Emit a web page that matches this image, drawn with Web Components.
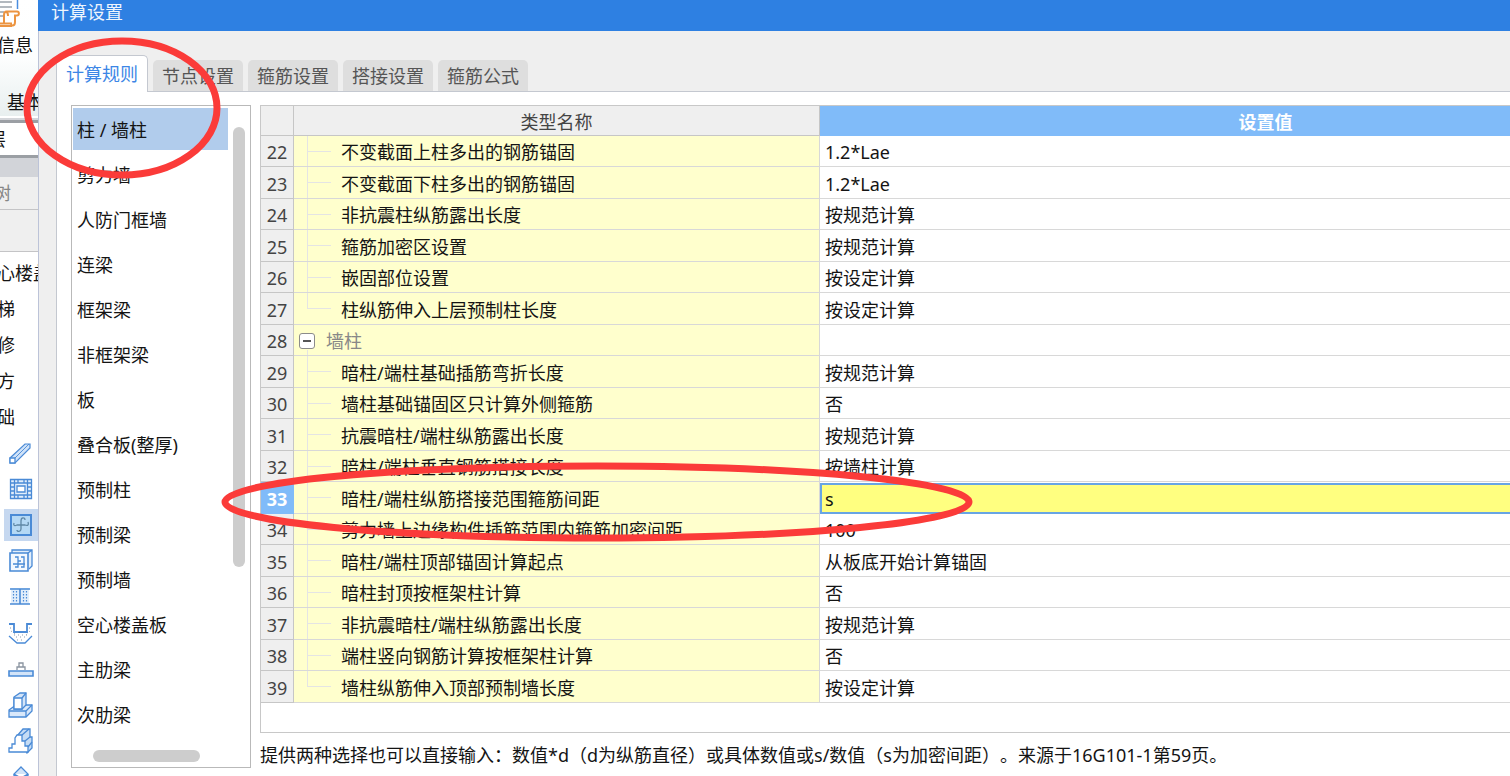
<!DOCTYPE html>
<html lang="zh-CN">
<head>
<meta charset="utf-8">
<title>计算设置</title>
<style>
  html, body { height: 100%; }
  body {
    margin: 0;
    font: 18px/24px "Noto Sans", "Noto Sans CJK SC", sans-serif;
    text-spacing-trim: space-all;
    color: #141414;
    background: #fff;
    overflow: hidden;
  }
</style>
</head>
<body>
<calc-app></calc-app>

<script>
const define = (name, html, setup) => {
  const template = document.createElement('template');
  template.innerHTML = html;
  customElements.define(name, class extends HTMLElement {
    constructor() {
      super();
      this.attachShadow({ mode: 'open' }).append(template.content.cloneNode(true));
    }
    connectedCallback() {
      if (setup && !this.ready) { this.ready = true; setup(this, this.shadowRoot); }
    }
  });
};

/* Toolbox of the main window, partly covered by the dialog */
const toolIcons = [
  ['梁', '<path fill="#cfe2f8" stroke-width="1.2" d="M2 18 17 4h5v4L7 23H2z"/><path fill="#fff" d="M2 18h5v5H2z"/><path stroke-width=".9" d="M7 18 21 4"/>'],
  ['板', '<path fill="#e2eefb" d="M2.5 3.5h21v19h-21z"/><path d="M2 7h21M2 19h21M6.500 3v20M19.500 3v20M10 3v4M16 3v4M10 19v4M16 19v4M2 11h4M2 15h4M20 11h4M20 15h4"/><path fill="#fff" d="M9 10h8v6H9z"/>'],
  ['板洞', '<path fill="#b4d8f5" stroke-width="2" d="M3 3h20v20H3z"/><path stroke="#5f87a5" d="M6 11c-1 3 1 3 3 2h8c3 1 4 0 3-3M13 17V9c0-4 4-4 4-1M13 12v5c0 3-4 3-4 1"/>', true],
  ['板受力筋', '<path fill="#e2eefb" d="M4 5V2h20v16l-3 3M20 5l4-3"/><path fill="#f3f8fe" stroke-width="1.6" d="M2 5h18v18H2z"/><path d="M7 9h3v10H7M13 9h3v10h-3M5 16h12M10 13h3"/>'],
  ['暗梁', '<path fill="#e2eefb" stroke="none" d="M3 4h18v16H3z"/><path stroke-width="1.6" d="M2 5h20M2 20h20M12 5v15"/><path stroke-dasharray="1.500 1.500" stroke-width="1.2" d="M5.500 7v12M8.500 7v12M15.500 7v12M18.500 7v12"/>'],
  ['基坑', '<path stroke-width="1.800" d="M1 4h5v8h13V4h5"/><path d="m1 16 8 7h8l7-7"/><path stroke="#8c9bac" stroke-dasharray="1 3" stroke-width="1" d="M2 8h3M21 8h3M3 11l4 3M22 11l-4 4M6 15h14M8 17h11M9 20h8"/>'],
  ['条基', '<path fill="#d3e4f8" stroke-width="1.600" d="M1 15h24v5H1z"/><path stroke="#8a94a0" d="M9 14v-3h8v3M11 11V7h4v4"/>'],
  ['独基', '<path fill="#d9e8fa" d="m1 18 7-5h16v6l-6 6H1z"/><path d="M1 19h17v6M18 19l6-6"/><path fill="#d3e4f8" d="m6 5 6-4h6v12l-4 4H6z"/><path fill="#fff" d="M6 6h8v11H6z"/><path d="m14 6 4-5"/>'],
  ['承台', '<path fill="#c5dcf5" d="m9 8 6-7h7v8h2v11l-5 5-4-11z"/><path fill="#fff" d="M1 24v-4h3v-4h3v-6l2-3h5v6h3v5h3v6z"/><path d="m14 7 7-6M17 13l5-4M20 19l4-5"/>'],
  ['桩', '<path fill="#d3e4f8" d="m13 3 7 7-7 4-7-4zM6 10v14h14V10"/>'],
];
define('tool-strip', `
  <style>
    :host { display: flex; flex-direction: column; overflow: hidden; background: #fff; white-space: nowrap; }
    .ribbon { height: 116px; flex: none; background: linear-gradient(#fff 0, #fdfefe 50%, #e8efef); }
    .ribbon svg { display: block; height: 34px; width: 22px; }
    .ribbon span { display: block; margin-left: -3px; line-height: 22px; }
    .ribbon span + span { margin: 35px 0 0 7px; }
    .floor { flex: none; height: 32px; line-height: 32px; border: solid #9b9fa4; border-width: 3px 0; outline: 2px solid #d4d6da; margin-top: 4px; }
    .floor span { margin-left: -12px; }
    .gap { flex: none; height: 19px; background: #d2d4d9; }
    .tree { flex: none; height: 32px; line-height: 32px; color: #858585; background: #efefef; border-bottom: 1px solid #c4c4c6; }
    .tree span { margin-left: -7px; }
    .head { flex: none; height: 41px; background: #efefef; border-bottom: 1px solid #c4c4c6; margin-bottom: 3px; }
    .item { flex: none; height: 36px; line-height: 36px; margin-left: -3px; }
    button { flex: none; height: 32px; margin: 2px 0 2px 4px; padding: 3px 4px; border: 0; background: none; display: flex; }
    button.on { background: #c6d8f0; }
    button svg { width: 26px; height: 26px; flex: none; fill: none; stroke: #4a8ad6; stroke-width: 1.3; }
  </style>
  <div class="ribbon">
    <svg viewBox="0 0 22 34" fill="none"><path d="M0 2h12M0 7h12M0 12h4M0 16h3" stroke="#9aa3ab" stroke-width="1.6"/><path d="M17.500 0v9" stroke="#4a8ee0" stroke-width="1.500"/><path fill="#fff" d="M4 23V15c0-2 1-3.500 2.500-3.500H17c2.500 0 2.500 4 0 4h-2V22c0 4.500-4 4.500-4 1.500H0M6 12c2 0 2 3 2 4M0 26h12" stroke="#ec9440" stroke-width="2"/></svg>
    <span>信息</span><span>基本</span>
  </div>
  <div class="floor"><span>层</span></div>
  <div class="gap"></div>
  <div class="tree"><span>树</span></div>
  <div class="head"></div>
  <div class="item">心楼盖</div><div class="item">梯</div><div class="item">修</div><div class="item">方</div><div class="item">础</div>
`, (host, root) => {
  for (const [label, shape, on] of toolIcons) {
    const b = document.createElement('button');
    b.type = 'button';
    b.setAttribute('aria-label', label);
    if (on) b.className = 'on';
    b.innerHTML = `<svg viewBox="0 0 26 26" aria-hidden="true">${shape}</svg>`;
    root.append(b);
  }
});

define('tab-button', `
  <style>
    :host { display: block; }
    button { display: block; width: 90px; height: 31px; padding: 0; border: 0; border-radius: 5px 5px 0 0; background: #dedede; color: #555; font: inherit; line-height: 30px; white-space: nowrap; }
    :host([active]) { margin-bottom: -1px; }
    :host([active]) button { box-sizing: border-box; width: 92px; height: 37px; line-height: 36px; background: #fff; color: #3c86e6; border: 1px solid #c4c8d0; border-bottom: 0; }
  </style>
  <button type="button" role="tab"><slot></slot></button>
`);

define('tab-bar', `
  <style>
    :host { display: flex; align-items: flex-end; gap: 5px; height: 60px; border-bottom: 1px solid #c4c8d0; }
  </style>
  <slot></slot>
`);

define('category-item', `
  <style>
    :host { display: block; }
    button { display: block; width: 100%; height: 42px; padding: 1px 4px 0; border: 0; background: none; color: inherit; font: inherit; text-align: left; white-space: nowrap; }
    :host([selected]) button { background: #b1ccec; }
  </style>
  <button type="button"><slot></slot></button>
`);

define('category-list', `
  <style>
    :host { display: grid; grid-template: minmax(0, 1fr) 12px / 155px 12px; column-gap: 5px; box-sizing: border-box; width: 180px; padding: 2px 1px 5px; border: 1px solid #b9b9b9; background: #fff; }
    .items { display: flex; flex-direction: column; gap: 3px; overflow: hidden; }
    .bar { background: #cdcdcd; border-radius: 6px; }
    .v { margin: 19px 0 0; height: 440px; }
    .h { width: 107px; margin-left: 20px; }
  </style>
  <div class="items"><slot></slot></div>
  <div class="bar v"></div>
  <div class="bar h"></div>
`);

const rows = [
  [22, '不变截面上柱多出的钢筋锚固', '1.2*Lae'],
  [23, '不变截面下柱多出的钢筋锚固', '1.2*Lae'],
  [24, '非抗震柱纵筋露出长度', '按规范计算'],
  [25, '箍筋加密区设置', '按规范计算'],
  [26, '嵌固部位设置', '按设定计算'],
  [27, '柱纵筋伸入上层预制柱长度', '按设定计算', 'last'],
  [28, '墙柱', '', 'group'],
  [29, '暗柱/端柱基础插筋弯折长度', '按规范计算'],
  [30, '墙柱基础锚固区只计算外侧箍筋', '否'],
  [31, '抗震暗柱/端柱纵筋露出长度', '按规范计算'],
  [32, '暗柱/端柱垂直钢筋搭接长度', '按墙柱计算'],
  [33, '暗柱/端柱纵筋搭接范围箍筋间距', 's', 'edit'],
  [34, '剪力墙上边缘构件插筋范围内箍筋加密间距', '100'],
  [35, '暗柱/端柱顶部锚固计算起点', '从板底开始计算锚固'],
  [36, '暗柱封顶按框架柱计算', '否'],
  [37, '非抗震暗柱/端柱纵筋露出长度', '按规范计算'],
  [38, '端柱竖向钢筋计算按框架柱计算', '否'],
  [39, '墙柱纵筋伸入顶部预制墙长度', '按设定计算', 'last'],
];
define('settings-grid', `
  <style>
    :host { display: block; overflow: hidden; border: 1px solid #c8c8c8; border-right: 0; background: #fff; }
    table { width: calc(100% + 202px); border-collapse: separate; border-spacing: 0; table-layout: fixed; }
    .n { width: 33px; } .name { width: 526px; }
    th, td { box-sizing: border-box; height: 31px; padding: 2px 0 0; border: solid #d8d8d8; border-width: 0 1px 1px 0; line-height: 24px; white-space: nowrap; text-align: left; vertical-align: middle; }
    thead th { height: 30px; background: #efefef; border-color: #c6c6c6; text-align: center; font-weight: normal; color: #444; }
    thead th:last-child { background: #80bbf9; color: #fff; font-weight: bold; border-color: #80bbf9; }
    tbody tr:nth-child(even) > * { height: 32px; }
    tbody th { background: #efefef; border-color: #c6c6c6; color: #444; font-weight: normal; text-align: center; }
    .label {
      padding-left: 47px;
      background: linear-gradient(#e4e4e4, #e4e4e4) 13px 0 / 1px 100% no-repeat, linear-gradient(#e4e4e4, #e4e4e4) 13px 15px / 24px 1px no-repeat, #ffffcd;
    }
    .last .label { background-size: 1px 15px, 24px 1px, auto; }
    .group .label { padding-left: 5px; color: #888; background: linear-gradient(#e4e4e4, #e4e4e4) 13px 25px / 1px 8px no-repeat, #ffffcd; }
    .group .label div { display: flex; align-items: center; gap: 11px; }
    .group button { width: 16px; height: 16px; padding: 0; border: 1px solid #8b8b8b; border-radius: 3px; background: #fff; display: grid; place-items: center; }
    .group button::before { content: ""; width: 8px; height: 2px; background: #555; }
    .value { padding-left: 5px; }
    .edit th { background: #80bbf9; border-color: #80bbf9; color: #fff; font-weight: bold; }
    .edit .value { padding: 0; border: 0; }
    input { display: block; box-sizing: border-box; width: 100%; height: 31px; margin: 0; padding: 1px 3px 0; border: 2px solid #68a5e4; border-radius: 0; outline: 0; background: #ffff80; color: inherit; font: inherit; }
  </style>
  <table>
    <colgroup><col class="n"><col class="name"><col></colgroup>
    <thead><tr><th></th><th scope="col">类型名称</th><th scope="col">设置值</th></tr></thead>
    <tbody></tbody>
  </table>
`, (host, root) => {
  root.querySelector('tbody').innerHTML = rows.map(([n, name, value, kind = '']) => {
    const label = kind === 'group' ? `<div><button type="button" aria-label="折叠"></button><span>${name}</span></div>` : name;
    const cell = kind === 'edit' ? `<input type="text" value="${value}" aria-labelledby="name${n}">` : value;
    return `<tr class="${kind}"><th scope="row">${n}</th><td class="label" id="name${n}">${label}</td><td class="value">${cell}</td></tr>`;
  }).join('');
});

define('calc-dialog', `
  <style>
    :host { display: flex; flex-direction: column; min-width: 0; background: #efefef; }
    header { flex: none; height: 31px; padding-left: 13px; background: #2e80e2; color: #eef5fd; line-height: 24px; }
    main { flex: 1; min-height: 0; display: flex; flex-direction: column; border-left: 1px solid #bcc3d8; padding-left: 17px; }
    tab-bar { flex: none; }
    .body { flex: 1; min-height: 0; display: grid; grid-template-columns: auto minmax(0, 1fr); gap: 9px; padding: 13px 0 8px 14px; background: #fff; border-left: 1px solid #c4c8d0; }
    .side { display: flex; flex-direction: column; min-height: 0; }
    settings-grid { flex: 1; min-height: 0; }
    p { flex: none; margin: 10px 0 1px; white-space: nowrap; }
  </style>
  <header>计算设置</header>
  <main>
    <tab-bar role="tablist">
      <tab-button active>计算规则</tab-button><tab-button>节点设置</tab-button><tab-button>箍筋设置</tab-button><tab-button>搭接设置</tab-button><tab-button>箍筋公式</tab-button>
    </tab-bar>
    <div class="body">
      <category-list>
        <category-item selected>柱 / 墙柱</category-item>
        <category-item>剪力墙</category-item>
        <category-item>人防门框墙</category-item>
        <category-item>连梁</category-item>
        <category-item>框架梁</category-item>
        <category-item>非框架梁</category-item>
        <category-item>板</category-item>
        <category-item>叠合板(整厚)</category-item>
        <category-item>预制柱</category-item>
        <category-item>预制梁</category-item>
        <category-item>预制墙</category-item>
        <category-item>空心楼盖板</category-item>
        <category-item>主肋梁</category-item>
        <category-item>次肋梁</category-item>
      </category-list>
      <div class="side">
        <settings-grid></settings-grid>
        <p>提供两种选择也可以直接输入：数值*d（d为纵筋直径）或具体数值或s/数值（s为加密间距）。来源于16G101-1第59页。</p>
      </div>
    </div>
  </main>
`);

/* Hand-marked ellipses lying over the window */
define('mark-layer', `
  <style>
    :host { position: absolute; inset: 0; pointer-events: none; }
    svg { display: block; width: 100%; height: 100%; fill: none; stroke: #fb3b39; stroke-width: 7; }
  </style>
  <svg aria-hidden="true"><ellipse cx="122" cy="108" rx="95" ry="67"/><ellipse cx="597" cy="502" rx="372" ry="36"/></svg>
`);

define('calc-app', `
  <style>
    :host { position: relative; display: grid; grid-template: minmax(0, 1fr) / 38px minmax(0, 1fr); height: 100vh; overflow: hidden; }
  </style>
  <tool-strip></tool-strip>
  <calc-dialog></calc-dialog>
  <mark-layer></mark-layer>
`);
</script>
</body>
</html>
